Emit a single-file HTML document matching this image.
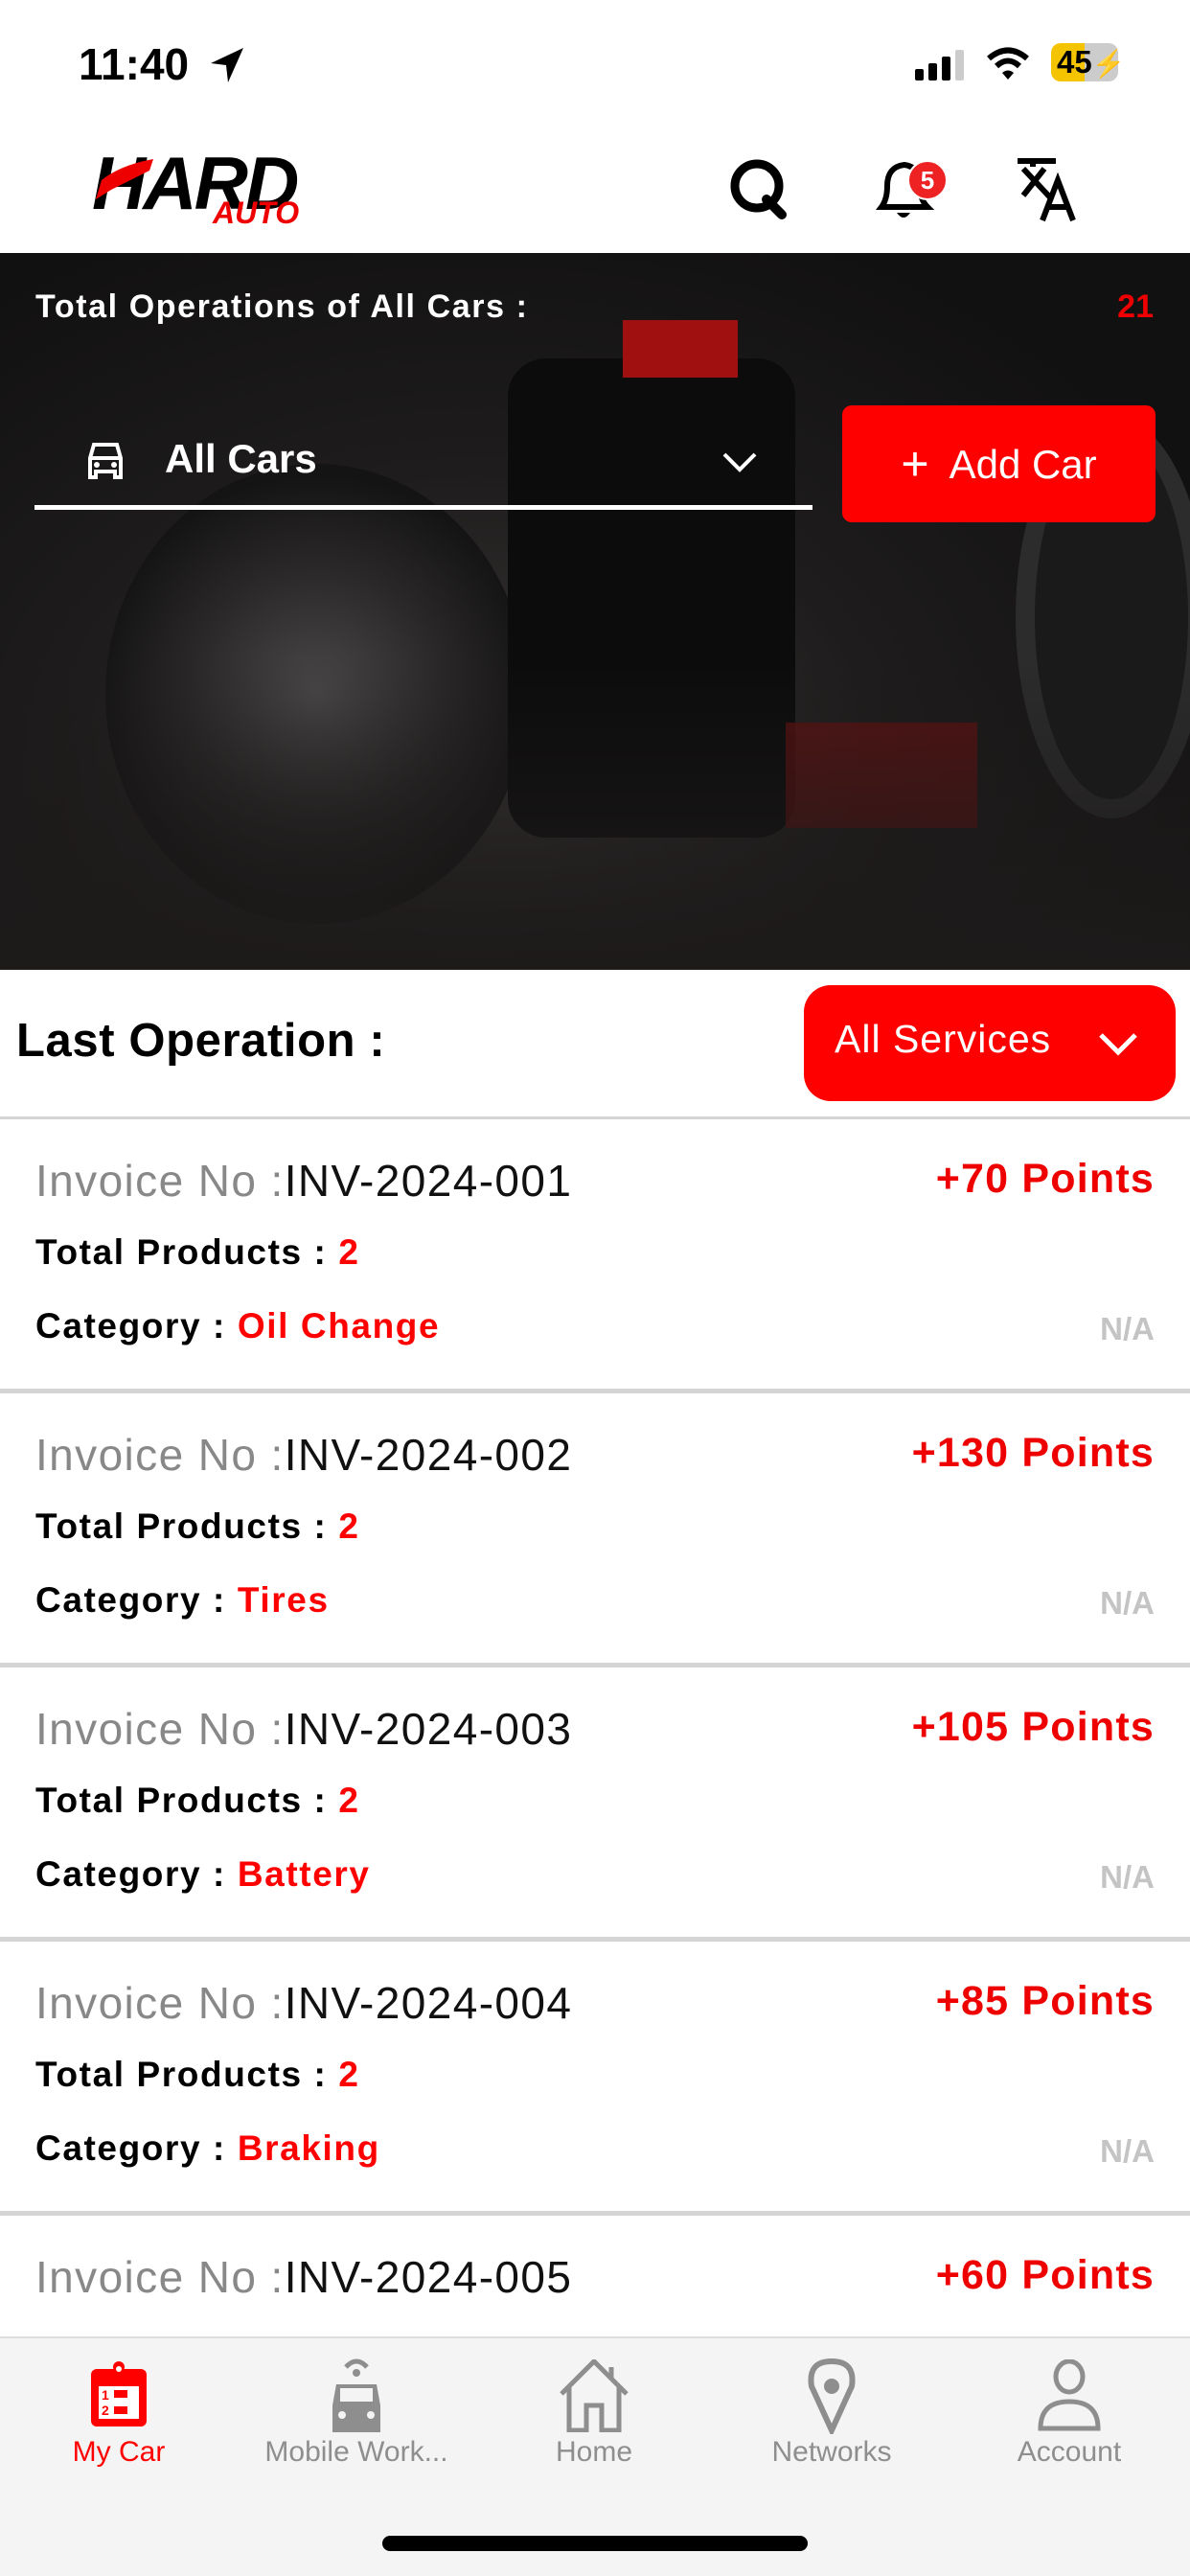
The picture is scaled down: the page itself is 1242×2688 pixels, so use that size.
<!DOCTYPE html>
<html><head><meta charset="utf-8"><style>
*{margin:0;padding:0;box-sizing:border-box}
body{width:1242px;height:2688px;overflow:hidden;background:#fff;font-family:"Liberation Sans",Arial,sans-serif;position:relative}
.abs{position:absolute}
.card{position:absolute;left:0;width:1242px;height:286px;border-bottom:5px solid #d4d4d4;background:#fff}
.inv{position:absolute;left:37px;top:37px;font-size:46px;color:#888;letter-spacing:1.4px}
.inv b{color:#111;font-weight:normal}
.pts{position:absolute;right:37px;top:38px;font-size:43px;color:#e00;font-weight:bold;letter-spacing:1.2px}
.tp{position:absolute;left:37px;top:118px;font-size:37px;font-weight:bold;color:#000;letter-spacing:1.6px}
.cat{position:absolute;left:37px;top:195px;font-size:37px;font-weight:bold;color:#000;letter-spacing:1.6px}
.red{color:#f00}
.na{position:absolute;right:37px;top:200px;font-size:33px;color:#c4c4c4;font-weight:bold}
.nav{position:absolute;top:2438px;left:0;width:1242px;height:250px;background:#f4f4f4;border-top:2px solid #ddd}
.ni{position:absolute;top:0;width:248px;text-align:center}
.ni span{position:absolute;top:102px;left:0;width:248px;font-size:30px;color:#8e8e8e}
</style></head><body>
<div class="abs" style="left:82px;top:40px;font-size:46px;font-weight:bold;color:#000">11:40</div>
<svg class="abs" style="left:216px;top:48px" width="42" height="40" viewBox="0 0 42 40"><path d="M38 2 L4 18 L20 20 L22 38 Z" fill="#000"/></svg>
<svg class="abs" style="left:955px;top:52px" width="56" height="32"><rect x="0" y="20" width="9" height="12" rx="2"/><rect x="14" y="14" width="9" height="18" rx="2"/><rect x="28" y="7" width="9" height="25" rx="2"/><rect x="42" y="0" width="9" height="32" rx="2" fill="#ccc"/></svg>
<svg class="abs" style="left:1028px;top:48px" width="48" height="36" viewBox="0 0 48 36"><path d="M4 13 Q24 -4 44 13" stroke="#000" stroke-width="6" fill="none"/><path d="M12 21 Q24 10 36 21" stroke="#000" stroke-width="6" fill="none"/><path d="M18 28 L24 35 L30 28 Q24 23 18 28Z"/></svg>
<div class="abs" style="left:1097px;top:45px;width:70px;height:40px;border-radius:10px;background:linear-gradient(90deg,#f5c400 50%,#ccc 50%);font-size:33px;font-weight:bold;line-height:40px;padding-left:6px">45<span style="font-size:28px">⚡</span></div>
<div class="abs" style="left:96px;top:146px;font-size:78px;font-weight:900;font-style:italic;letter-spacing:-3px;color:#000">HARD</div>
<svg class="abs" style="left:96px;top:158px" width="72" height="60"><path d="M4 50 L10 30 Q30 14 64 8 L60 20 Q40 30 20 40 Z" fill="#e00"/></svg>
<div class="abs" style="left:222px;top:204px;font-size:32px;font-weight:900;font-style:italic;color:#e00">AUTO</div>
<svg class="abs" style="left:760px;top:164px" width="62" height="66" viewBox="0 0 62 66"><circle cx="30" cy="30" r="23" stroke="#000" stroke-width="9" fill="none"/><path d="M40 44 L56 60" stroke="#000" stroke-width="10" stroke-linecap="round"/></svg>
<svg class="abs" style="left:910px;top:164px" width="82" height="70" viewBox="0 0 82 70"><path d="M10 52 Q16 44 16 30 Q16 10 34 8 Q50 10 50 30 Q50 44 58 52 Z" stroke="#000" stroke-width="6" fill="none"/><path d="M26 58 Q33 68 40 58" fill="#000"/><circle cx="58" cy="24" r="20" fill="#e22" stroke="#fff" stroke-width="2"/><text x="58" y="33" font-size="26" fill="#fff" text-anchor="middle" font-family="Liberation Sans" font-weight="bold">5</text></svg>
<svg class="abs" style="left:1060px;top:164px" width="70" height="70" viewBox="0 0 70 70"><path d="M2 4 H42 M18 4 V10 M8 12 L36 42 M30 12 L8 40" stroke="#000" stroke-width="6" fill="none"/><path d="M28 66 L44 24 L60 66 M34 52 H54" stroke="#000" stroke-width="6" fill="none"/></svg>
<div class="abs" style="left:0;top:264px;width:1242px;height:748px;background:radial-gradient(ellipse at 40% 70%,#3a3636 0%,#1e1c1c 40%,#121111 80%);overflow:hidden">
 <div class="abs" style="left:110px;top:220px;width:440px;height:480px;border-radius:50%;background:radial-gradient(circle,#4a4848 0%,#2a2828 40%,#151414 70%)"></div>
 <div class="abs" style="left:530px;top:110px;width:300px;height:500px;background:#0c0c0c;border-radius:40px"></div>
 <div class="abs" style="left:650px;top:70px;width:120px;height:60px;background:#a01010"></div>
 <div class="abs" style="left:820px;top:490px;width:200px;height:110px;background:#6a1010;opacity:.7"></div>
 <div class="abs" style="left:1060px;top:170px;width:200px;height:420px;border-radius:50%;background:#1a1a1a;border:20px solid #2c2c2c"></div>
 <div class="abs" style="left:0;top:420px;width:1242px;height:330px;background:linear-gradient(#0000,#1d1a1a)"></div>
</div>
<div class="abs" style="left:37px;top:301px;font-size:34px;font-weight:bold;color:#fff;letter-spacing:1.6px">Total Operations of All Cars :</div>
<div class="abs" style="right:38px;top:301px;font-size:34px;font-weight:bold;color:#e00">21</div>
<svg class="abs" style="left:86px;top:460px" width="48" height="42" viewBox="0 0 48 42"><path d="M8 18 L12 4 H36 L40 18 V38 H34 V32 H14 V38 H8 Z M8 18 H40" stroke="#fff" stroke-width="4" fill="none"/><circle cx="15" cy="25" r="3" fill="#fff"/><circle cx="33" cy="25" r="3" fill="#fff"/></svg>
<div class="abs" style="left:172px;top:455px;font-size:42px;font-weight:bold;color:#fff">All Cars</div>
<svg class="abs" style="left:752px;top:470px" width="40" height="24"><path d="M4 4 L20 20 L36 4" stroke="#fff" stroke-width="4" fill="none"/></svg>
<div class="abs" style="left:36px;top:527px;width:812px;height:5px;background:#fff"></div>
<div class="abs" style="left:879px;top:423px;width:327px;height:122px;background:#f00;border-radius:10px;color:#fff;font-size:42px;line-height:122px;text-align:center"><span style="font-size:50px;vertical-align:-2px">+</span>&nbsp; Add Car</div>
<div class="abs" style="left:17px;top:1058px;font-size:49px;font-weight:bold;color:#000;letter-spacing:0.6px">Last Operation :</div>
<div class="abs" style="left:839px;top:1028px;width:388px;height:121px;background:#f00;border-radius:28px;color:#fff;font-size:41px;line-height:112px;padding-left:32px;letter-spacing:1px">All Services</div>
<svg class="abs" style="left:1145px;top:1076px" width="44" height="28"><path d="M4 4 L22 22 L40 4" stroke="#fff" stroke-width="5" fill="none"/></svg>
<div class="abs" style="left:0;top:1165px;width:1242px;height:3px;background:#d4d4d4"></div>
<div class="card" style="top:1168px"><div class="inv">Invoice No :<b>INV-2024-001</b></div><div class="pts">+70 Points</div><div class="tp">Total Products : <span class="red">2</span></div><div class="cat">Category : <span class="red">Oil Change</span></div><div class="na">N/A</div></div>
<div class="card" style="top:1454px"><div class="inv">Invoice No :<b>INV-2024-002</b></div><div class="pts">+130 Points</div><div class="tp">Total Products : <span class="red">2</span></div><div class="cat">Category : <span class="red">Tires</span></div><div class="na">N/A</div></div>
<div class="card" style="top:1740px"><div class="inv">Invoice No :<b>INV-2024-003</b></div><div class="pts">+105 Points</div><div class="tp">Total Products : <span class="red">2</span></div><div class="cat">Category : <span class="red">Battery</span></div><div class="na">N/A</div></div>
<div class="card" style="top:2026px"><div class="inv">Invoice No :<b>INV-2024-004</b></div><div class="pts">+85 Points</div><div class="tp">Total Products : <span class="red">2</span></div><div class="cat">Category : <span class="red">Braking</span></div><div class="na">N/A</div></div>
<div class="card" style="top:2312px;border:none"><div class="inv">Invoice No :<b>INV-2024-005</b></div><div class="pts">+60 Points</div></div>
<div class="nav">
 <div class="ni" style="left:0"><svg style="margin-top:22px" width="70" height="72" viewBox="0 0 70 72"><rect x="6" y="10" width="58" height="60" rx="6" fill="#f00"/><rect x="14" y="20" width="42" height="42" fill="#fff"/><rect x="14" y="20" width="42" height="8" fill="#f00"/><circle cx="35" cy="8" r="6" fill="#f00"/><circle cx="35" cy="10" r="3" fill="#fff"/><text x="17" y="42" font-size="14" fill="#f00" font-family="Liberation Sans" font-weight="bold">1</text><rect x="30" y="32" width="14" height="8" fill="#f00"/><text x="17" y="58" font-size="14" fill="#f00" font-family="Liberation Sans" font-weight="bold">2</text><rect x="30" y="49" width="14" height="8" fill="#f00"/></svg><span style="color:#f00">My Car</span></div>
 <div class="ni" style="left:248px"><svg style="margin-top:16px" width="70" height="82" viewBox="0 0 70 82"><path d="M24 14 Q35 2 46 14" stroke="#8e8e8e" stroke-width="5" fill="none"/><circle cx="35" cy="20" r="4" fill="#8e8e8e"/><path d="M14 32 H56 L60 54 V82 H10 V54 Z" fill="#8e8e8e"/><rect x="18" y="36" width="34" height="14" fill="#f4f4f4"/><circle cx="20" cy="64" r="4" fill="#f4f4f4"/><circle cx="50" cy="64" r="4" fill="#f4f4f4"/></svg><span>Mobile Work...</span></div>
 <div class="ni" style="left:496px"><svg style="margin-top:22px" width="80" height="76" viewBox="0 0 80 76"><path d="M6 36 L40 2 L74 36 M14 28 V74 H32 V48 H48 V74 H66 V28 M58 8 V20" stroke="#8e8e8e" stroke-width="5" fill="none"/></svg><span>Home</span></div>
 <div class="ni" style="left:744px"><svg style="margin-top:20px" width="66" height="80" viewBox="0 0 66 80"><path d="M33 76 L12 30 Q8 4 33 4 Q58 4 54 30 Z" stroke="#8e8e8e" stroke-width="6" fill="none"/><circle cx="33" cy="30" r="8" fill="#8e8e8e"/></svg><span>Networks</span></div>
 <div class="ni" style="left:992px"><svg style="margin-top:22px" width="72" height="76" viewBox="0 0 72 76"><ellipse cx="36" cy="18" rx="14" ry="16" stroke="#8e8e8e" stroke-width="5" fill="none"/><path d="M6 72 Q6 44 36 44 Q66 44 66 72 Z" stroke="#8e8e8e" stroke-width="5" fill="none"/></svg><span>Account</span></div>
</div>
<div class="abs" style="left:399px;top:2646px;width:444px;height:16px;border-radius:8px;background:#000"></div>
</body></html>
